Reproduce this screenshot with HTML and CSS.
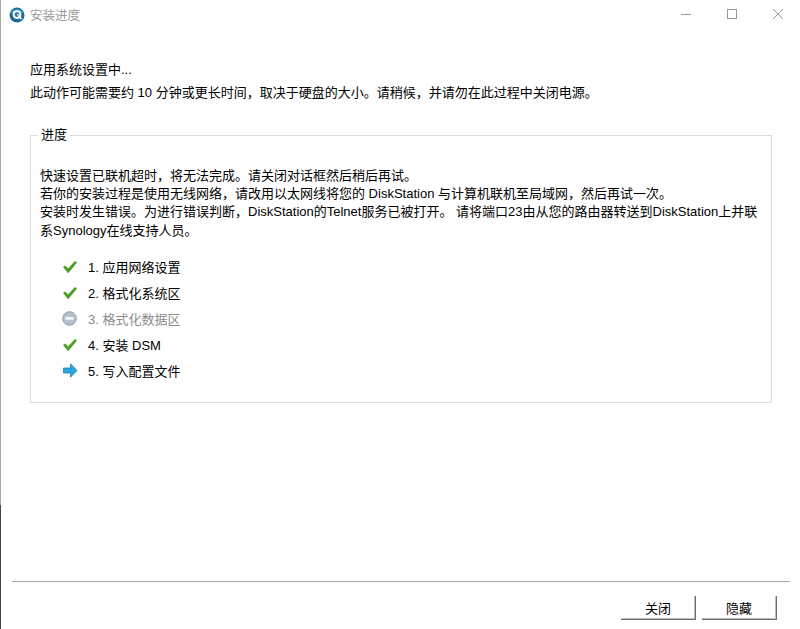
FILE: index.html
```html
<!DOCTYPE html>
<html lang="zh-CN">
<head>
<meta charset="utf-8">
<title>安装进度</title>
<link rel="stylesheet" href="styles.css">
</head>
<body>
<div class="window">
  <header class="titlebar">
    <svg class="app-icon" width="16" height="16" viewBox="0 0 16 16">
      <circle cx="8" cy="8" r="7.5" fill="#1a6a9c"/>
      <path d="M1.5 6a7 6 0 0 1 13 0z" fill="#4aa3cf"/>
      <circle cx="8" cy="7.6" r="4.4" fill="#fff"/>
      <circle cx="8" cy="7.6" r="2.4" fill="#1f76a8"/>
      <rect x="8" y="7" width="1.6" height="1.6" fill="#fff"/>
      <path d="M9.5 9l3 3" stroke="#fff" stroke-width="1.8"/>
    </svg>
    <span class="title">安装进度</span>
    <div class="controls">
      <svg class="ctl" width="46" height="30" viewBox="0 0 46 30"><path d="M18 14.5h10" stroke="#999" stroke-width="1"/></svg>
      <svg class="ctl" width="46" height="30" viewBox="0 0 46 30"><rect x="18.5" y="9.5" width="9" height="9" fill="none" stroke="#999"/></svg>
      <svg class="ctl" width="46" height="30" viewBox="0 0 46 30"><path d="M18 9l10 10M28 9l-10 10" stroke="#999" stroke-width="1"/></svg>
    </div>
  </header>
  <main class="content">
    <p class="status">应用系统设置中...</p>
    <p class="status-sub">此动作可能需要约 10 分钟或更长时间，取决于硬盘的大小。请稍候，并请勿在此过程中关闭电源。</p>
    <fieldset class="group">
      <legend class="group-title">进度</legend>
      <div class="message">
        <p>快速设置已联机超时，将无法完成。请关闭对话框然后稍后再试。</p>
        <p>若你的安装过程是使用无线网络，请改用以太网线将您的 DiskStation 与计算机联机至局域网，然后再试一次。</p>
        <p>安装时发生错误。为进行错误判断，DiskStation的Telnet服务已被打开。 请将端口23由从您的路由器转送到DiskStation上并联系Synology在线支持人员。</p>
      </div>
      <ul class="steps">
        <li class="step">
          <svg class="step-icon" width="16" height="18" viewBox="0 0 16 18"><path d="M1 8l2.400-1.600L6 9.400 13 2l2 1.600L6.200 14.200z" fill="#4a9e22"/></svg>
          <span class="step-label">1. 应用网络设置</span>
        </li>
        <li class="step">
          <svg class="step-icon" width="16" height="18" viewBox="0 0 16 18"><path d="M1 8l2.400-1.600L6 9.400 13 2l2 1.600L6.200 14.200z" fill="#4a9e22"/></svg>
          <span class="step-label">2. 格式化系统区</span>
        </li>
        <li class="step step-off">
          <svg class="step-icon" width="16" height="18" viewBox="0 0 16 18"><circle cx="7.500" cy="7.500" r="6.800" fill="#b6c0cc" stroke="#939da8"/><rect x="3.500" y="6.200" width="8" height="2.400" fill="#fff"/></svg>
          <span class="step-label">3. 格式化数据区</span>
        </li>
        <li class="step">
          <svg class="step-icon" width="16" height="18" viewBox="0 0 16 18"><path d="M1 8l2.400-1.600L6 9.400 13 2l2 1.600L6.200 14.200z" fill="#4a9e22"/></svg>
          <span class="step-label">4. 安装 DSM</span>
        </li>
        <li class="step">
          <svg class="step-icon" width="16" height="18" viewBox="0 0 16 18"><path d="M1.500 5h7V.8L15 7.500l-6.500 6.700V10h-7z" fill="#2ba6dc" stroke="#1b82b4" stroke-width=".8"/></svg>
          <span class="step-label">5. 写入配置文件</span>
        </li>
      </ul>
    </fieldset>
  </main>
  <footer class="footer">
    <div class="actions">
      <button class="btn">关闭</button>
      <button class="btn">隐藏</button>
    </div>
  </footer>
</div>
</body>
</html>
```
FILE: styles.css
```css
* { box-sizing: border-box; }
html, body { margin: 0; height: 100%; background: #fff; }
body { font-family: "Liberation Sans", "Noto Sans CJK SC", sans-serif; font-size: 13px; color: #000; }
p { margin: 0; }
.window {
  width: 800px; height: 629px; display: flex; flex-direction: column;
  border-left: 1px solid #a8a8a8;
  border-image: linear-gradient(#a8a8a8 0, #a8a8a8 504px, #3f4a45 504px, #3f4a45 100%) 1;
  background: #fff;
}
.titlebar { height: 30px; display: flex; align-items: center; padding-left: 8px; }
.app-icon { flex: none; margin-top: -1px; }
.title { margin-left: 5px; color: #9a9a9a; font-size: 12.5px; margin-top: -2px; }
.controls { margin-left: auto; display: flex; margin-right: -1px; margin-top: -1px; }
.ctl { display: block; }
.content { flex: 1; padding: 31px 28px 0 29px; display: flex; flex-direction: column; }
.status { line-height: 18px; }
.status-sub { line-height: 18px; margin-top: 5px; }
.group {
  margin: 25px 0 0; padding: 0 10px 0 9px; border: 1px solid #dcdcdc; height: 276px; min-width: 0;
}
.group-title { padding: 0 3px; margin-left: -2px; line-height: 16px; }
.message { margin-top: 24px; line-height: 18.2px; width: 722px; }
.steps { list-style: none; margin: 15px 0 0; padding: 0 0 0 22px; }
.step { display: flex; align-items: center; height: 26px; gap: 10px; }
.step-icon { flex: none; }
.step-label { margin-top: -2px; }
.step-off { color: #8c8c8c; }
.footer { flex: none; height: 48px; padding: 0 10px 0 11px; }
.footer::before { content: ""; display: block; height: 1px; background: #a8a8a8; }
.actions { display: flex; justify-content: flex-end; gap: 6px; padding: 14px 13px 0 0; }
.btn {
  width: 75px; height: 24px; padding: 0; background: #fff; font: inherit; color: #000;
  border: 0; border-right: 1px solid #6e6e6e; border-bottom: 1px solid #6e6e6e;
  box-shadow: inset -1px -1px 0 #bdbdbd;
}
```
